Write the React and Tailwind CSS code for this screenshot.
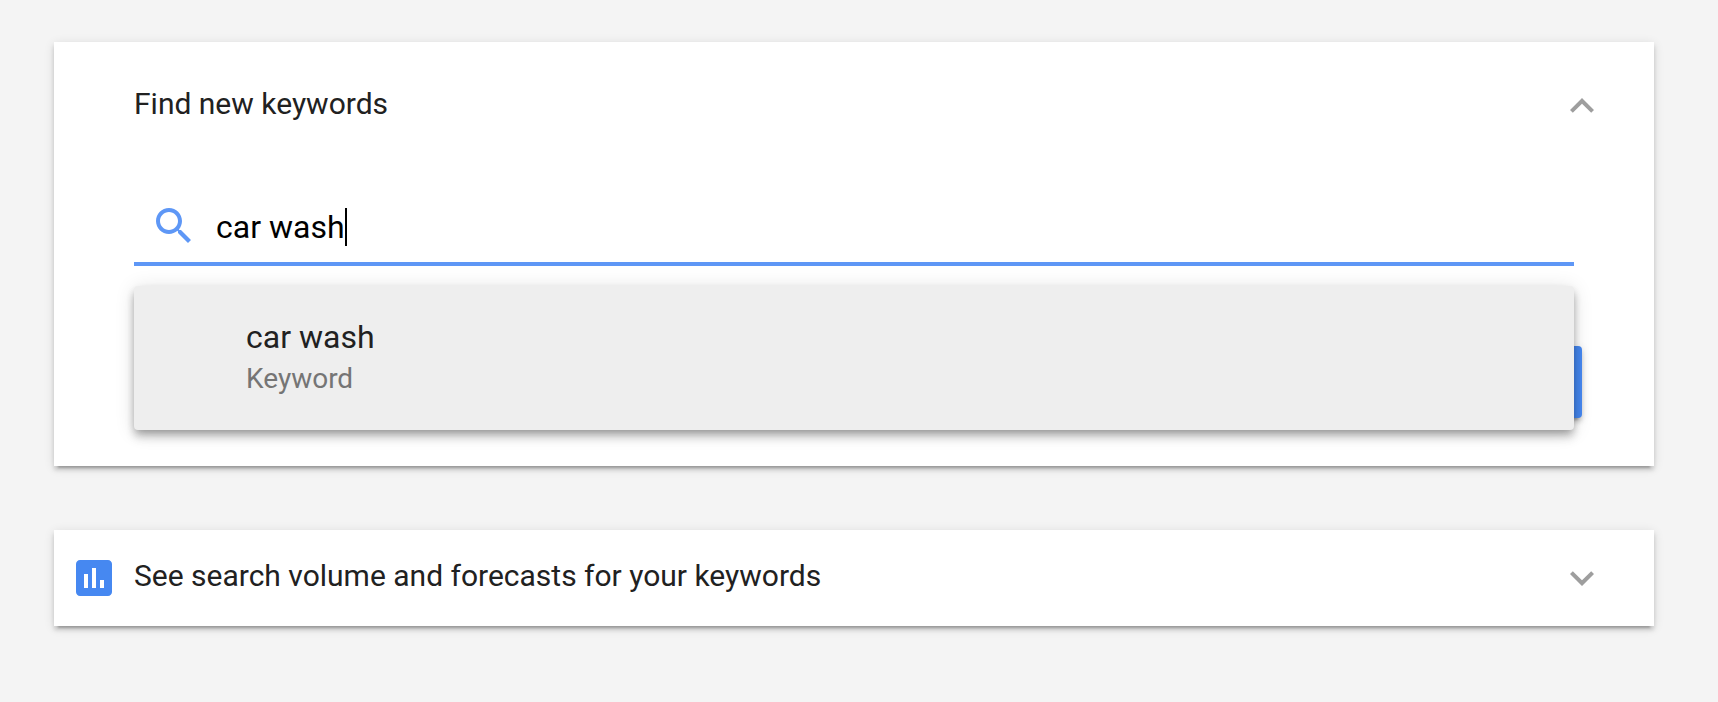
import { useState } from "react";

const cardClass =
  "bg-white shadow-[0_4px_4px_rgba(0,0,0,0.14),0_6px_2px_-4px_rgba(0,0,0,0.2),0_2px_10px_rgba(0,0,0,0.12)]";

function Icon({ d, className }) {
  return (
    <svg viewBox="0 0 24 24" fill="currentColor" aria-hidden="true" className={`size-12 shrink-0 ${className}`}>
      <path d={d} />
    </svg>
  );
}

const paths = {
  less: "M12 8l-6 6 1.41 1.41L12 10.83l4.59 4.58L18 14z",
  more: "M16.59 8.59L12 13.17 7.41 8.59 6 10l6 6 6-6z",
  search:
    "M15.5 14h-.79l-.28-.27C15.41 12.59 16 11.11 16 9.5 16 5.91 13.09 3 9.5 3S3 5.91 3 9.5 5.91 16 9.5 16c1.61 0 3.09-.59 4.23-1.57l.27.28v.79l5 4.99L20.49 19l-4.99-5zm-6 0C7.01 14 5 11.99 5 9.5S7.01 5 9.5 5 14 7.01 14 9.5 11.99 14 9.5 14z",
  chart:
    "M19 3H5c-1.1 0-2 .9-2 2v14c0 1.1.9 2 2 2h14c1.1 0 2-.9 2-2V5c0-1.1-.9-2-2-2zM9 17H7v-7h2v7zm4 0h-2V7h2v10zm4 0h-2v-4h2v4z",
};

function FindKeywords() {
  const [query, setQuery] = useState("car wash");
  return (
    <section className={cardClass}>
      <header className="flex h-32 items-center justify-between pr-12 pl-20">
        <h2 className="pb-1 text-[30px] leading-9">Find new keywords</h2>
        <button type="button" aria-label="Collapse" aria-expanded="true" className="text-[#9e9e9e]">
          <Icon d={paths.less} />
        </button>
      </header>
      <form className="px-20 pt-5 pb-12" onSubmit={(e) => e.preventDefault()}>
        <div className="relative">
          <label className="flex h-[76px] cursor-text items-center border-b-4 border-[#5e97f6] pl-4">
            <Icon d={paths.search} className="text-[#5e97f6]" />
            <span className="flex pt-0.5 pl-[18px]">
              <input
                type="text"
                aria-label="Keywords"
                value={query}
                onChange={(e) => setQuery(e.target.value)}
                className="field-sizing-content text-[32px] leading-[38px] text-black caret-transparent outline-none"
              />
              <span className="w-0.5 bg-black" />
            </span>
          </label>
          <ul
            role="listbox"
            aria-label="Suggestions"
            className="absolute inset-x-0 top-full z-10 mt-5 rounded bg-[#eeeeee] shadow-[0_8px_10px_rgba(0,0,0,0.14),0_2px_20px_rgba(0,0,0,0.12),0_4px_8px_-2px_rgba(0,0,0,0.3)]"
          >
            <li role="option" aria-selected="true" className="flex h-36 flex-col justify-center pl-28">
              <span className="text-[32px] leading-[42px]">car wash</span>
              <span className="text-[28px] leading-[42px] text-[#757575]">Keyword</span>
            </li>
          </ul>
        </div>
        <div className="-mr-2 flex justify-end pt-20">
          <button
            type="submit"
            aria-label="Get started"
            className="h-[72px] w-52 rounded bg-[#4688f1] shadow-[0_4px_4px_rgba(0,0,0,0.14),0_6px_2px_-4px_rgba(0,0,0,0.2),0_2px_10px_rgba(0,0,0,0.12)]"
          />
        </div>
      </form>
    </section>
  );
}

function SearchVolume() {
  return (
    <section className={`${cardClass} flex h-24 items-center pr-12 pl-4`}>
      <Icon d={paths.chart} className="text-[#4688f1]" />
      <h2 className="flex-1 pb-1 pl-4 text-[30px] leading-9">See search volume and forecasts for your keywords</h2>
      <button type="button" aria-label="Expand" aria-expanded="false" className="text-[#9e9e9e]">
        <Icon d={paths.more} />
      </button>
    </section>
  );
}

export default function App() {
  return (
    <main className="flex min-h-screen flex-col gap-16 bg-[#f4f4f4] pt-[42px] pr-16 pb-12 pl-[54px] font-[Roboto,sans-serif] text-[#212121]">
      <FindKeywords />
      <SearchVolume />
    </main>
  );
}
